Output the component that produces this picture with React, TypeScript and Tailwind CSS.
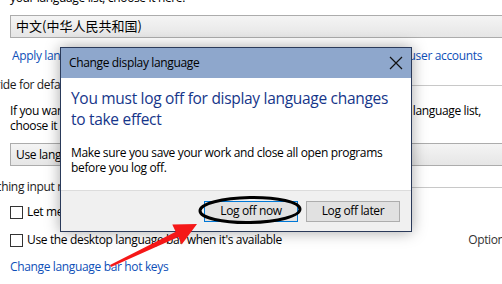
import React from "react";

function Dropdown({ children }: { children: React.ReactNode }) {
  return (
    <div className="relative h-[23px] w-[498px] border border-[#acacac] bg-gradient-to-b from-[#f4f4f4] to-[#e6e6e6] flex items-center pl-[5px]">
      <span className="leading-[16px] whitespace-nowrap">{children}</span>
      <svg className="absolute right-[-6px] top-[6px]" width="10" height="10" viewBox="0 0 10 10">
        <path d="M1 3 L5 7 L9 3" fill="none" stroke="#222" strokeWidth="1.3" />
      </svg>
    </div>
  );
}

function Heading({ children, shift }: { children: React.ReactNode; shift: string }) {
  return (
    <div className={"flex items-center h-[16px] mt-[13px] " + shift}>
      <span className="whitespace-nowrap leading-[16px] text-[#1a1a1a]">{children}</span>
      <div className="flex-1 h-px bg-[#c8c8c8] ml-[6px]" />
    </div>
  );
}

function Checkbox({ children }: { children: React.ReactNode }) {
  return (
    <div className="flex items-center h-[16px] gap-[4px]">
      <div className="w-[13px] h-[13px] border border-[#333] bg-white shrink-0" />
      <span className="whitespace-nowrap leading-[16px]">{children}</span>
    </div>
  );
}

export default function App() {
  return (
    <div className="relative w-[502px] h-[284px] overflow-hidden bg-white text-[12px] tracking-[-0.35px] text-black font-['Open_Sans','Noto_Sans_CJK_SC',sans-serif]">
      <div className="flex flex-col pl-[10px] -mt-[10px] w-[560px]">
        <div className="h-[16px] leading-[16px] whitespace-nowrap">your language list, choose it here:</div>
        <div className="mt-[9px]">
          <Dropdown>
            <span className="text-[13px] tracking-normal font-['Noto_Sans_CJK_SC',sans-serif]">中文(中华人民共和国)</span>
          </Dropdown>
        </div>
        <div className="mt-[10px] h-[16px] leading-[16px] whitespace-nowrap text-[#0e4fb8] pl-[2px] w-[472px] flex">
          <span className="flex-1 min-w-0 overflow-hidden">Apply language settings to the welcome screen, system accounts, and new</span>
          <span className="shrink-0 ml-[4px]">user accounts</span>
        </div>
        <Heading shift="-ml-[40px]">Override for default input method</Heading>
        <div className="mt-[10px] leading-[15px]">
          <div className="whitespace-nowrap w-[471px] flex">
            <span className="flex-1 min-w-0 overflow-hidden">If you want to use an input method that's different from the first one in your</span>
            <span className="shrink-0 ml-[4px]">language list,</span>
          </div>
          <div className="whitespace-nowrap">choose it here:</div>
        </div>
        <div className="mt-[10px]">
          <Dropdown>Use language list (Recommended)</Dropdown>
        </div>
        <Heading shift="-ml-[36px]">Switching input methods</Heading>
        <div className="mt-[9px]">
          <Checkbox>Let me set a different input method for each app window</Checkbox>
        </div>
        <div className="mt-[12px] flex w-[500px] justify-between items-center">
          <Checkbox>Use the desktop language bar when it's available</Checkbox>
          <span className="text-[#333] leading-[16px]">Options</span>
        </div>
        <div className="mt-[11px] h-[16px] leading-[16px] text-[#0e4fb8] whitespace-nowrap">Change language bar hot keys</div>
      </div>

      {/* Dialog */}
      <div className="absolute left-[60px] top-[47px] w-[352px] h-[185px] border border-[#2a3a5a] bg-white flex flex-col shadow-[0_0_14px_rgba(0,0,0,0.35)]">
        <div className="h-[30px] bg-[#8ea7cc] flex items-center justify-between pl-[8px] pr-[8px]">
          <span className="leading-[16px]">Change display language</span>
          <svg width="14" height="14" viewBox="0 0 14 14">
            <path d="M1 1 L13 13 M13 1 L1 13" stroke="#111" strokeWidth="1.2" />
          </svg>
        </div>
        <div className="flex-1 pl-[10px] pr-[4px] pt-[10px]">
          <div className="w-[322px] text-[15.5px] tracking-[-0.3px] leading-[21px] text-[#16368a]">
            You must log off for display language changes to take effect
          </div>
          <div className="mt-[15px] leading-[15px]">
            Make sure you save your work and close all open programs before you log off.
          </div>
        </div>
        <div className="h-[41px] border-t border-[#dcdcdc] bg-[#f0f0f0] flex items-center justify-end gap-[8px] pr-[11px]">
          <div className="w-[94px] h-[21px] border border-[#0078d7] bg-[#e1e1e1] flex items-center justify-center leading-[16px]">Log off now</div>
          <div className="w-[94px] h-[21px] border border-[#adadad] bg-[#e1e1e1] flex items-center justify-center leading-[16px]">Log off later</div>
        </div>
      </div>

      {/* Annotations */}
      <svg className="absolute left-0 top-0 pointer-events-none" width="502" height="284" viewBox="0 0 502 284">
        <ellipse cx="250" cy="210" rx="50" ry="12.5" fill="none" stroke="#000" strokeWidth="3" transform="rotate(-1 250 210)" />
        <polygon points="110,265 175.7,231.7 172.3,224.4 197,224 181.7,244.4 178.3,237.1 111,267" fill="#f51818" />
      </svg>
    </div>
  );
}
